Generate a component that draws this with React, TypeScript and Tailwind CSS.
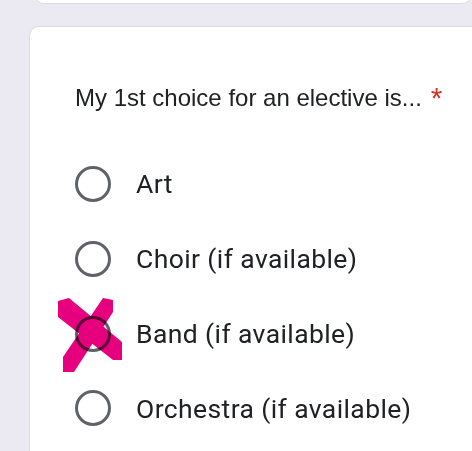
const options = ['Art', 'Choir (if available)', 'Band (if available)', 'Orchestra (if available)'];

function Radio() {
  return <span className="block h-[36px] w-[36px] shrink-0 rounded-full border-[3px] border-[#5f6368]" />;
}

export default function App() {
  return (
    <div className="relative h-[451px] w-[472px] overflow-hidden bg-[#ebeaf2]">
      {/* previous question card, mostly scrolled away */}
      <div className="ml-[34px] mt-[-20px] h-[24px] rounded-b-[10px] border border-[#dadce0] bg-white" />

      <div className="ml-[29px] mt-[22px] w-[470px] rounded-[10px] border border-[#dadce0] bg-white pl-[45px] pt-[53px]">
        <div
          className="flex h-[36px] items-center text-[24px] text-[#202124]"
          style={{ fontFamily: '"Liberation Sans", Arial, sans-serif' }}
        >
          <span>My 1st choice for an elective is...</span>
          <span className="ml-[9px] text-[30px] leading-none text-[#d93025]">*</span>
        </div>

        <div className="mt-[31px] flex flex-col pb-[20px]">
          {options.map((o) => (
            <div key={o} className="flex h-[74.7px] items-center gap-[25px]">
              <Radio />
              <span
                className="text-[26.5px] tracking-[0.4px] text-[#202124]"
                style={{ fontFamily: 'Roboto, "Liberation Sans", sans-serif' }}
              >
                {o}
              </span>
            </div>
          ))}
        </div>
      </div>

      {/* pink cross mark over the Band option */}
      <svg
        className="pointer-events-none absolute left-0 top-0 mix-blend-multiply"
        width="472"
        height="451"
        viewBox="0 0 472 451"
      >
        <polygon points="58,301 69,298 122,342 122,360 113,360 58,317" fill="#e6007e" />
        <polygon points="103,298 113,300 113,312 74,372 63,372 63,357" fill="#e6007e" />
      </svg>
    </div>
  );
}
